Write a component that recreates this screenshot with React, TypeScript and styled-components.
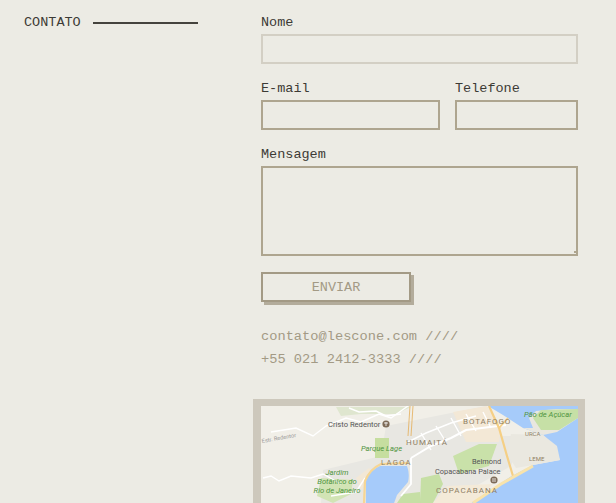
import React from "react";
import styled, { createGlobalStyle } from "styled-components";

const Global = createGlobalStyle`
  html, body { margin: 0; padding: 0; height: 100%; overflow: hidden; background: #ecebe4; }
  * { box-sizing: border-box; }
`;
const Page = styled.div`
  display: flex; height: 503px; overflow: hidden; background: #ecebe4;
  font-family: "Liberation Mono", monospace; font-size: 13.5px; color: #3c3a35;
`;
const Side = styled.aside`
  width: 261px; flex: none; padding: 15px 0 0 24px;
`;
const Heading = styled.h2`
  display: flex; align-items: center; gap: 12px; margin: 0; height: 15px;
  font: inherit; font-weight: 400;
  &::after { content: ""; width: 105px; height: 2px; background: #45433d; }
`;
const Main = styled.main`
  width: 317px; flex: none; padding-top: 15px; display: block;
`;
const Row = styled.div`
  display: flex; gap: 15px; margin-bottom: 17px;
`;
const Field = styled.label<{ $w?: number }>`
  display: flex; flex-direction: column; gap: 4px;
  ${(p) => (p.$w ? `width: ${p.$w}px; flex: none;` : "flex: 1;")}
`;
const Caption = styled.span`
  height: 15px; line-height: 15px; flex: none;
`;
const Input = styled.input<{ $light?: boolean }>`
  display: block; width: 100%; height: 30px; flex: none; margin: 0; padding: 0 6px; border-radius: 0;
  background: transparent; outline: none;
  border: 2px solid ${(p) => (p.$light ? "#d3cfc4" : "#aea58f")};
`;
const AreaBox = styled.div`
  position: relative; height: 90px; flex: none;
  &::after {
    content: ""; position: absolute; right: 2px; bottom: 3px; width: 2px; height: 2px;
    background: #aea58f;
  }
`;
const Area = styled.textarea`
  display: block; width: 100%; height: 90px; margin: 0; padding: 6px; border-radius: 0;
  background: transparent; outline: none; border: 2px solid #aea58f; resize: none;
`;
const Send = styled.button`
  display: block; width: 150px; height: 30px; margin: -1px 0 0; padding: 1px 0 0; border-radius: 0;
  background: #ecebe4; border: 2px solid #a39a85; box-shadow: 3px 3px 0 #b3ac9b;
  font: inherit; color: #a39a85; cursor: pointer;
`;
const Contacts = styled.div`
  margin-top: 24px; color: #a39a85; font-size: 13.7px; line-height: 22.5px;
`;
const Line = styled.div`
  white-space: pre;
`;
const MapFrame = styled.div`
  margin: 28px 0 0 -8px; width: 332px; height: 200px;
  border: 8px solid #cdc8bc; border-top-width: 7px; border-right-width: 7px;
  background: #f1efe8; overflow: hidden;
`;
const MapSvg = styled.svg`
  display: block;
`;

const g = { fontFamily: "Roboto, sans-serif" };

function RioMap() {
  return (
    <MapSvg width="317" height="184" viewBox="0 0 317 184" style={g}>
      <rect width="317" height="184" fill="#f1efe8" />
      {/* urban grey */}
      <path d="M125 20 L225 0 L240 30 L260 30 L250 60 L215 80 L170 97 L60 97 L62 64 L120 50Z" fill="#e8e7e2" />
      {/* urban peach */}
      <path d="M192 6 L226 0 L240 22 L238 36 L205 36Z" fill="#f3e8d6" />
      <path d="M172 97 L186 80 L232 78 L212 97Z" fill="#f4ead8" />
      <path d="M95 72 L108 62 L112 66 L100 84Z" fill="#f3e8d6" />
      {/* water */}
      <path d="M227 0 L317 0 L317 184 L170 184 L190 112 L212 96 L249 71 L272 59 L299 54 L292 39 L282 29 L262 22 L242 9Z" fill="#a6cbfa" />
      <path d="M262 22 L272 22 L268 12 L275 5 L295 3 L317 3 L317 12 L296 26 L282 29Z" fill="#e9e7df" />
      <path d="M272 12 L280 4 L317 3 L317 12 L298 24 L280 24Z" fill="#c6e0a6" />
      <path d="M250 28 L282 29 L296 40 L299 54 L272 59 L255 62 L246 48Z" fill="#eae8e0" />
      {/* parks */}
      <path d="M75 1 L150 1 L135 8 L100 8 L80 10Z" fill="#dfe6cf" />
      <rect x="114" y="32" width="14" height="20" fill="#c6de9f" />
      <path d="M192 50 L218 38 L236 38 L228 60 L198 68Z" fill="#c9e1a9" />
      <path d="M60 72 L92 74 L90 88 L72 97 L56 90Z" fill="#d2e4b5" />
      <path d="M136 97 L142 88 L159 86 L160 97Z" fill="#c6dfa5" />
      <path d="M159 97 L160 72 L178 68 L182 78 L172 97Z" fill="#c6dfa5" />
      {/* lagoon */}
      <path d="M105 100 L105 74 Q109 64 119 60 L146 60 Q149 68 147 76 L136 89 L132 100Z" fill="#a6cbfa" />
      {/* white roads */}
      <g fill="none" stroke="#fff" strokeWidth="1.4">
        <path d="M2 72 L10 70 L18 75 L30 70 L50 72 L62 68 L80 78" />
        <path d="M10 26 L35 22 L52 30 L65 20 L85 12 L100 16 L118 8 L130 12 L147 0" />
        <path d="M88 2 L98 6 L115 5 L125 10 L140 8" />
        <path d="M150 52 L170 40 L190 32 L205 24 L245 19" strokeWidth="2" />
        <path d="M145 37 L165 27 L190 17 L215 10 M170 44 L160 27 M185 36 L175 20 M200 30 L190 12 M215 25 L205 8 M230 22 L222 6" />
        <path d="M150 52 L150 78 L140 90" strokeWidth="1.8" />
        <path d="M70 90 L95 86 L104 72" />
      </g>
      {/* orange roads */}
      <g fill="none" stroke="#f5cf85" strokeWidth="1.8">
        <path d="M228 0 L238 22 L246 50 L252 70" strokeWidth="2.2" />
        <path d="M247 12 L238 22" />
        <path d="M212 97 L240 78 L272 60" stroke="#f8e3ab" strokeWidth="3" />
        <path d="M103 97 L104 75 Q109 63 120 58 L147 57" strokeWidth="2.2" stroke="#f6d695" />
      </g>
      <g fill="none" stroke="#e4ad57" strokeWidth="0.8">
        <path d="M149 0 L147 30 M152 0 L150 30" />
      </g>
      {/* labels */}
      <text x="67" y="21" fontSize="7.6" fill="#555">Cristo Redentor</text>
      <circle cx="125" cy="18" r="3.6" fill="#7c6a57" />
      <path d="M123 17 h4 M125 16 v4" stroke="#fff" strokeWidth="0.8" />
      <text x="1" y="37" fontSize="5.6" fill="#999" transform="rotate(-10 1 37)">Estr. Redentor</text>
      <text x="100" y="45" fontSize="7.6" fill="#4f9440" fontStyle="italic">Parque Lage</text>
      <text x="145" y="39" fontSize="8" letterSpacing="1" fill="#8e7e64">HUMAITÁ</text>
      <text x="120" y="59" fontSize="7.6" letterSpacing="1.3" fill="#8e7e64">LAGOA</text>
      <g fontSize="7.6" fill="#4f9440" fontStyle="italic" textAnchor="middle">
        <text x="76" y="69">Jardim</text>
        <text x="76" y="78">Botânico do</text>
        <text x="76" y="87">Rio de Janeiro</text>
      </g>
      <text x="202" y="18" fontSize="8" letterSpacing="0.9" fill="#8e7e64">BOTAFOGO</text>
      <text x="264" y="30" fontSize="6" fill="#8e7e64">URCA</text>
      <text x="268" y="55" fontSize="6" fill="#8e7e64">LEME</text>
      <text x="263" y="11" fontSize="7.6" fill="#4f9440" fontStyle="italic">Pão de Açúcar</text>
      <text x="211" y="58" fontSize="7.4" fill="#555">Belmond</text>
      <text x="174" y="68" fontSize="7.4" fill="#555">Copacabana Palace</text>
      <circle cx="233" cy="74" r="3.6" fill="#7c6a57" />
      <path d="M231 73 h4 M231 75 h4" stroke="#fff" strokeWidth="0.8" />
      <text x="175" y="87" fontSize="8" letterSpacing="1" fill="#8e7e64">COPACABANA</text>
    </MapSvg>
  );
}

export default function App() {
  return (
    <>
      <Global />
      <Page>
        <Side>
          <Heading>CONTATO</Heading>
        </Side>
        <Main>
          <Row>
            <Field>
              <Caption>Nome</Caption>
              <Input $light />
            </Field>
          </Row>
          <Row>
            <Field>
              <Caption>E-mail</Caption>
              <Input />
            </Field>
            <Field $w={123}>
              <Caption>Telefone</Caption>
              <Input />
            </Field>
          </Row>
          <Row>
            <Field>
              <Caption>Mensagem</Caption>
              <AreaBox>
                <Area />
              </AreaBox>
            </Field>
          </Row>
          <Send type="button">ENVIAR</Send>
          <Contacts>
            <Line>contato@lescone.com ////</Line>
            <Line>+55 021 2412-3333 ////</Line>
          </Contacts>
          <MapFrame>
            <RioMap />
          </MapFrame>
        </Main>
      </Page>
    </>
  );
}
